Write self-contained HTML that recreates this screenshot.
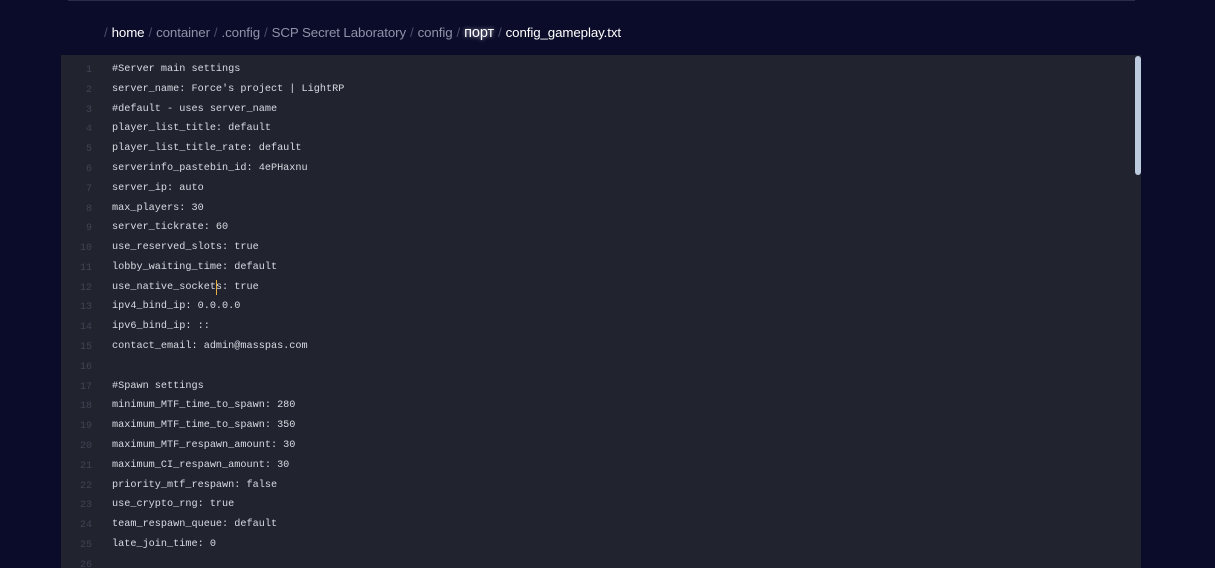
<!DOCTYPE html>
<html><head><meta charset="utf-8"><style>
html,body{margin:0;padding:0;width:1215px;height:568px;overflow:hidden;background:#0b0c29;position:relative}
.top{position:absolute;left:68px;top:0;width:1067px;height:1px;background:#2a2c48;}
.bc{position:absolute;left:104px;top:25px;font-family:"Liberation Sans","DejaVu Sans",sans-serif;font-size:13.3px;color:#8e93a8;white-space:nowrap;letter-spacing:-0.1px}
.bc .s{color:#4a4f68;margin:0 4px}
.bc .w{color:#fff}
.bc .g{color:#fff;text-shadow:0 0 4px #aab}
.ed{position:absolute;left:61px;top:55px;width:1080px;height:513px;background:#21242e;overflow:hidden}
.sb{position:absolute;left:1135px;top:56px;width:6px;height:119px;background:#bccbdd;border-radius:3px;}
.ln{position:absolute;left:0;width:31px;text-align:right;font-family:"Liberation Mono","DejaVu Sans Mono",monospace;font-size:10px;color:#3f4454;}
.tx{position:absolute;left:51px;font-family:"Liberation Mono","DejaVu Sans Mono",monospace;font-size:10.2px;color:#d8dbe2;white-space:pre;}
.cur{position:absolute;left:216px;top:280px;width:1px;height:15px;background:#e8b040;}
</style></head><body>
<div class="top"></div>
<div class="bc"><span class="s" style="margin-left:0">/</span><span class="w">home</span><span class="s">/</span>container<span class="s">/</span>.config<span class="s">/</span>SCP Secret Laboratory<span class="s">/</span>config<span class="s">/</span><span class="g" style="font-size:14.5px">порт</span><span class="s">/</span><span class="w">config_gameplay.txt</span></div>
<div class="ed" id="c"></div>
<div class="sb"></div>
<div class="cur"></div>
<script>
var L=["#Server main settings","server_name: Force's project | LightRP","#default - uses server_name","player_list_title: default","player_list_title_rate: default","serverinfo_pastebin_id: 4ePHaxnu","server_ip: auto","max_players: 30","server_tickrate: 60","use_reserved_slots: true","lobby_waiting_time: default","use_native_sockets: true","ipv4_bind_ip: 0.0.0.0","ipv6_bind_ip: ::","contact_email: admin@masspas.com","","#Spawn settings","minimum_MTF_time_to_spawn: 280","maximum_MTF_time_to_spawn: 350","maximum_MTF_respawn_amount: 30","maximum_CI_respawn_amount: 30","priority_mtf_respawn: false","use_crypto_rng: true","team_respawn_queue: default","late_join_time: 0",""];
var h="";for(var i=0;i<L.length;i++){var y=9+i*19.79;
h+='<div class="ln" style="top:'+(y+1)+'px">'+(i+1)+'</div><div class="tx" style="top:'+y+'px">'+L[i].replace(/&/g,"&amp;").replace(/</g,"&lt;")+'</div>';}
document.getElementById("c").innerHTML=h;
</script>
</body></html>
